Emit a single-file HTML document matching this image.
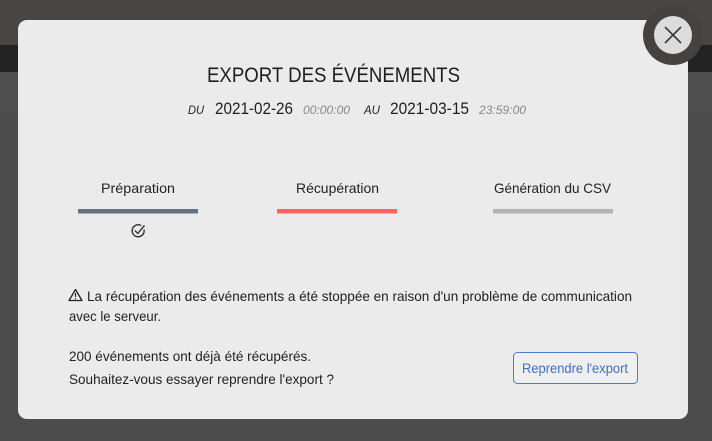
<!DOCTYPE html>
<html><head><meta charset="utf-8"><style>
html,body{margin:0;padding:0;width:712px;height:441px;overflow:hidden;background:#484644;font-family:"Liberation Sans",sans-serif}
.hdr{position:absolute;left:0;top:45px;width:712px;height:27px;background:#232323}
.flt{position:absolute;left:0;top:72px;width:712px;height:40px;background:#4f4f4f}
.rows{position:absolute;left:0;top:112px;width:712px;height:329px;background:#4c4c4c}
.modal{position:absolute;left:18px;top:20px;width:670px;height:399px;background:#ebebeb;border-radius:9px}
.close{position:absolute;left:643px;top:5px;width:60px;height:60px;border-radius:50%;background:#454341}
.close .in{position:absolute;left:11px;top:11px;width:38px;height:38px;border-radius:50%;background:#dcdcdc}
svg{position:absolute;left:0;top:0}
</style></head><body>
<div class="hdr"></div><div class="flt"></div><div class="rows"></div>
<div class="modal"></div>
<div class="close"><div class="in"></div></div>
<svg width="712" height="441" viewBox="0 0 712 441" font-family="Liberation Sans, sans-serif">
 <path d="M665 27 L681 43 M681 27 L665 43" stroke="#3a3a3a" stroke-width="1.6"/>
 <text x="207" y="82" font-size="21" fill="#1e1e1e" textLength="253" lengthAdjust="spacingAndGlyphs">EXPORT DES ÉVÉNEMENTS</text>
 <text x="188" y="114" font-size="11.5" font-style="italic" fill="#222" textLength="16" lengthAdjust="spacingAndGlyphs">DU</text>
 <text x="215" y="114" font-size="17" fill="#1e1e1e" textLength="78" lengthAdjust="spacingAndGlyphs">2021-02-26</text>
 <text x="303" y="114" font-size="11.5" font-style="italic" fill="#888" textLength="47" lengthAdjust="spacingAndGlyphs">00:00:00</text>
 <text x="364" y="114" font-size="11.5" font-style="italic" fill="#222" textLength="16" lengthAdjust="spacingAndGlyphs">AU</text>
 <text x="390" y="114" font-size="17" fill="#1e1e1e" textLength="79" lengthAdjust="spacingAndGlyphs">2021-03-15</text>
 <text x="479" y="114" font-size="11.5" font-style="italic" fill="#888" textLength="47" lengthAdjust="spacingAndGlyphs">23:59:00</text>
 <text x="101" y="193" font-size="14" fill="#222" textLength="74" lengthAdjust="spacingAndGlyphs">Préparation</text>
 <text x="296" y="193" font-size="14" fill="#222" textLength="83" lengthAdjust="spacingAndGlyphs">Récupération</text>
 <text x="494" y="193" font-size="14" fill="#222" textLength="117" lengthAdjust="spacingAndGlyphs">Génération du CSV</text>
 <rect x="78" y="209" width="120" height="4.5" fill="#657080"/>
 <rect x="277" y="209" width="120" height="4.5" fill="#f66565"/>
 <rect x="493" y="209" width="120" height="4.5" fill="#b3b3b3"/>
 <path d="M144 229.5 A6 6 0 1 1 141.2 225.6" fill="none" stroke="#333" stroke-width="1.4"/>
 <path d="M134.8 230.5 L137.8 233.4 L144.5 225.5" fill="none" stroke="#333" stroke-width="1.4"/>
 <path d="M75.5 289.5 L82 300.5 L69 300.5 Z" fill="none" stroke="#222" stroke-width="1.3" stroke-linejoin="round"/>
 <path d="M75.5 293 L75.5 297" stroke="#222" stroke-width="1.2"/><circle cx="75.5" cy="298.8" r="0.7" fill="#222"/>
 <text x="87" y="301" font-size="14" fill="#222" textLength="545" lengthAdjust="spacingAndGlyphs">La récupération des événements a été stoppée en raison d'un problème de communication</text>
 <text x="69" y="321" font-size="14" fill="#222" textLength="92" lengthAdjust="spacingAndGlyphs">avec le serveur.</text>
 <text x="69" y="361" font-size="14" fill="#222" textLength="242" lengthAdjust="spacingAndGlyphs">200 événements ont déjà été récupérés.</text>
 <text x="69" y="384" font-size="14" fill="#222" textLength="265" lengthAdjust="spacingAndGlyphs">Souhaitez-vous essayer reprendre l'export ?</text>
 <rect x="513.5" y="352.5" width="124" height="31" rx="4" fill="#efefef" stroke="#4a7cd6" stroke-width="1"/>
 <text x="522" y="373" font-size="14" fill="#3d6fc9" textLength="106" lengthAdjust="spacingAndGlyphs">Reprendre l'export</text>
</svg>
</body></html>
